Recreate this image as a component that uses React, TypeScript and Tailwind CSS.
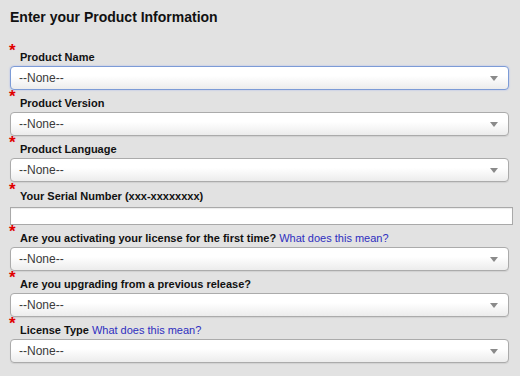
import React from "react";

const Select = ({ focused = false }: { focused?: boolean }) => (
  <div
    className={
      "relative h-[24px] w-[499px] rounded-[4px] border bg-gradient-to-b from-[#ffffff] from-40% to-[#ececec] flex items-center pl-[8px] " +
      (focused
        ? "border-[#7c9bd6] shadow-[0_0_2px_#a8b8ee]"
        : "border-[#ababab] shadow-[0_1px_1px_rgba(0,0,0,0.08)]")
    }
  >
    <span className="text-[12px] text-[#3a3a3a] leading-none">--None--</span>
    <span className="absolute right-[10px] top-[9px] w-0 h-0 border-l-[4px] border-r-[4px] border-t-[5px] border-l-transparent border-r-transparent border-t-[#8a8a8a]" />
  </div>
);

const Label = ({
  text,
  link,
  pt = "pt-[5px]",
  pb = "pb-[1px]",
}: {
  text: string;
  link?: boolean;
  pt?: string;
  pb?: string;
}) => (
  <div className={"flex items-start leading-[16px] " + pt + " " + pb}>
    <span className="text-[#e00000] text-[17px] font-bold leading-[10px] w-[10px] -mt-[3px] -ml-[1px] mr-[1px]">*</span>
    <span className="text-[11px] font-bold text-[#111]">{text}</span>
    {link && (
      <span className="text-[11px] text-[#2e2ebf] ml-[3px]">What does this mean?</span>
    )}
  </div>
);

export default function App() {
  return (
    <div
      className="w-[520px] h-[376px] bg-[#e2e2e2] px-[10px] pt-[7px] overflow-hidden"
      style={{ fontFamily: '"Liberation Sans", Arial, sans-serif' }}
    >
      <div className="text-[14px] font-bold leading-[20px] text-[#111] mb-[17px]">
        Enter your Product Information
      </div>
      <Label text="Product Name" />
      <Select focused />
      <Label text="Product Version" />
      <Select />
      <Label text="Product Language" />
      <Select />
      <Label text="Your Serial Number (xxx-xxxxxxxx)" pt="pt-[6px]" pb="pb-[3px]" />
      <div className="h-[18px] w-[503px] border border-[#a9a9a9] bg-white shadow-[inset_0_1px_1px_rgba(0,0,0,0.08)]" />
      <Label text="Are you activating your license for the first time?" link />
      <Select />
      <Label text="Are you upgrading from a previous release?" />
      <Select />
      <Label text="License Type" link />
      <Select />
    </div>
  );
}
